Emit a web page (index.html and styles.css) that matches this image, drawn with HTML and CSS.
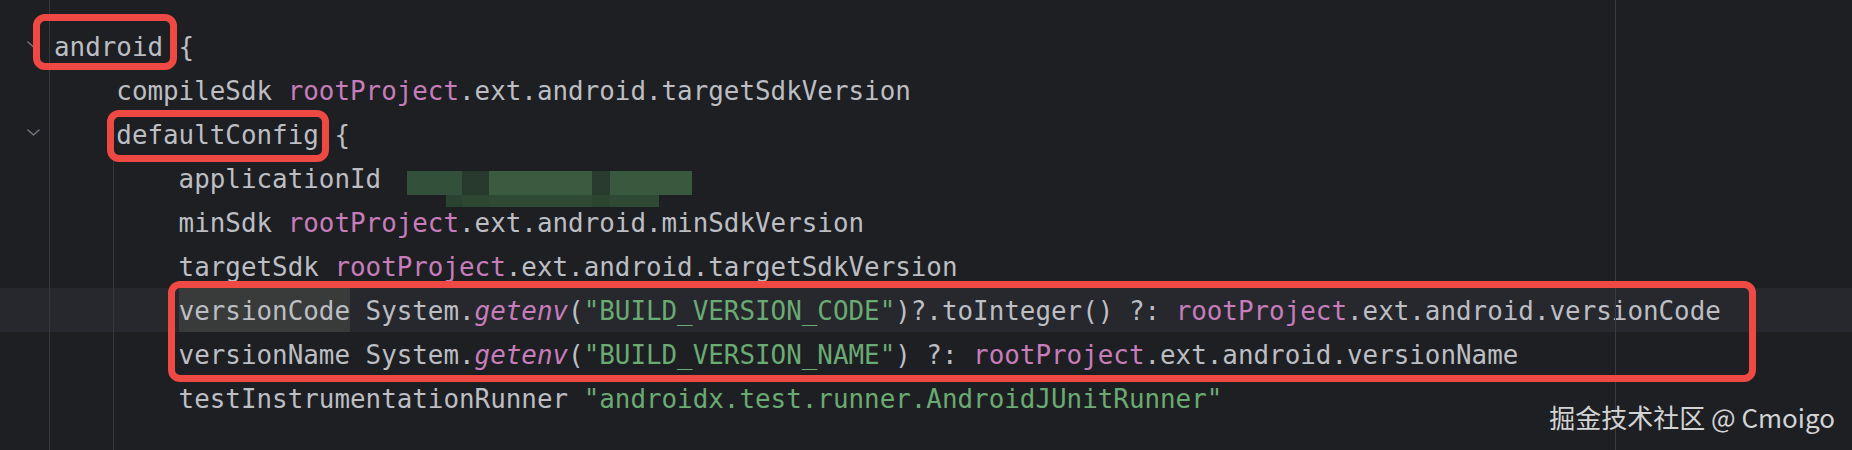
FILE: index.html
```html
<!DOCTYPE html>
<html lang="en">
<head>
<meta charset="utf-8">
<title>build.gradle</title>
<link rel="stylesheet" href="styles.css">
</head>
<body>
<div class="editor">
  <div class="code">
    <div class="line"><span class="gutter"><svg class="fold" viewBox="0 0 13 7"><polyline points="1,1 6.5,6 12,1"/></svg></span><span class="text">android {</span></div>
    <div class="line"><span class="gutter"></span><span class="text">    compileSdk <span class="prop">rootProject</span>.ext.android.targetSdkVersion</span></div>
    <div class="line"><span class="gutter"><svg class="fold" viewBox="0 0 13 7"><polyline points="1,1 6.5,6 12,1"/></svg></span><span class="text">    defaultConfig {</span></div>
    <div class="line"><span class="gutter"></span><span class="text">        applicationId <span class="blur"><i class="b1"></i><i class="b2"></i><i class="b3"></i><i class="b4"></i><i class="b5"></i><i class="c1"></i><i class="c2"></i><i class="c3"></i><i class="c4"></i><i class="c5"></i></span></span></div>
    <div class="line"><span class="gutter"></span><span class="text">        minSdk <span class="prop">rootProject</span>.ext.android.minSdkVersion</span></div>
    <div class="line"><span class="gutter"></span><span class="text">        targetSdk <span class="prop">rootProject</span>.ext.android.targetSdkVersion</span></div>
    <div class="line current"><span class="gutter"></span><span class="text">        <span class="caret-word">versionCode</span> System.<span class="static">getenv</span>(<span class="str">"BUILD_VERSION_CODE"</span>)?.toInteger() ?: <span class="prop">rootProject</span>.ext.android.versionCode</span></div>
    <div class="line"><span class="gutter"></span><span class="text">        versionName System.<span class="static">getenv</span>(<span class="str">"BUILD_VERSION_NAME"</span>) ?: <span class="prop">rootProject</span>.ext.android.versionName</span></div>
    <div class="line"><span class="gutter"></span><span class="text">        testInstrumentationRunner <span class="str">"androidx.test.runner.AndroidJUnitRunner"</span></span></div>
  </div>

  <div class="guide guide-0"></div>
  <div class="guide guide-1"></div>
  <div class="guide margin-line"></div>

  <div class="mark mark-android"></div>
  <div class="mark mark-default"></div>
  <div class="mark mark-version"></div>

  <div class="watermark">掘金技术社区 @ Cmoigo</div>
</div>
</body>
</html>
```

FILE: styles.css
```css
html, body {
  margin: 0;
  padding: 0;
  background: #1e1f22;
}

.editor {
  position: relative;
  width: 1852px;
  height: 450px;
  overflow: hidden;
  background: #1e1f22;
  font-family: "DejaVu Sans Mono", "Liberation Mono", monospace;
  font-size: 25.88px;
  color: #bcbec4;
}

.code {
  display: flex;
  flex-direction: column;
  padding-top: 24px;
}

.line {
  display: flex;
  align-items: center;
  height: 44px;
}

.line.current {
  background: #26282d;
}

.gutter {
  flex: 0 0 54px;
  display: flex;
  align-items: center;
  height: 44px;
}

.fold {
  width: 13px;
  height: 7px;
  margin-left: 27px;
  margin-top: -3px;
  fill: none;
  stroke: #6f737a;
  stroke-width: 1.6;
  stroke-linecap: round;
  stroke-linejoin: round;
}

.text {
  white-space: pre;
  line-height: 44px;
  height: 44px;
  padding-top: 1px;
}

.prop { color: #c77dbb; }
.static { color: #c77dbb; font-style: italic; }
.str { color: #6aab73; }

.caret-word {
  display: inline-block;
  background: #393b3a;
  line-height: 44px;
  height: 44px;
  margin-top: -1px;
  padding-top: 1px;
  box-sizing: border-box;
  vertical-align: top;
}

/* pixelated (redacted) value */
.blur {
  display: inline-grid;
  grid-template-columns: 55px 27px 103px 18px 82px;
  grid-template-rows: 24px 12px;
  vertical-align: top;
  margin-top: 14px;
  margin-left: 10px;
}
.blur i { display: block; }
.b1 { background: #33503a; }
.b2 { background: #283a2d; }
.b3 { background: #3b5b40; }
.b4 { background: #293a2e; }
.b5 { background: #39593e; }
.c1 { background: linear-gradient(90deg, #1e1f22 0 70%, #2a4230 70%); }
.c2 { background: #2d4732; }
.c3 { background: #2f4a34; }
.c4 { background: #2c4531; }
.c5 { background: linear-gradient(90deg, #2f4a34 0 60%, #1e1f22 60%); }

.guide {
  position: absolute;
  width: 1px;
  background: #35373c;
}
.guide-0 { left: 49px; top: 0; bottom: 0; }
.guide-1 { left: 113px; top: 156px; bottom: 0; }
.margin-line { left: 1615px; top: 0; bottom: 0; background: #393b40; }

.mark {
  position: absolute;
  border: 7px solid #ee4a43;
  border-radius: 12px;
  box-sizing: border-box;
}
.mark-android { left: 33px; top: 14px; width: 144px; height: 56px; }
.mark-default { left: 107px; top: 110px; width: 222px; height: 52px; }
.mark-version { left: 168px; top: 281px; width: 1588px; height: 101px; }

.watermark {
  position: absolute;
  right: 17px;
  top: 402px;
  line-height: 30px;
  font-family: "Noto Sans CJK SC", "Noto Sans", sans-serif;
  font-size: 26px;
  color: #d2d3d5;
}
```
